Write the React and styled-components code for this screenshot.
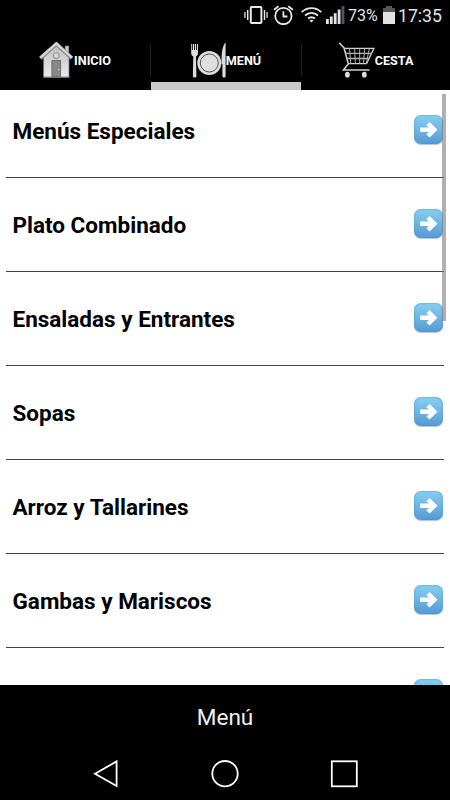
import React from "react";
import styled, { createGlobalStyle } from "styled-components";

const GlobalStyle = createGlobalStyle`
  * {
    box-sizing: border-box;
  }
  body {
    margin: 0;
    background: #000;
    font-family: Roboto, "Liberation Sans", sans-serif;
  }
  svg {
    display: block;
    flex: none;
  }
`;

const Screen = styled.div`
  display: flex;
  flex-direction: column;
  width: 450px;
  height: 800px;
  overflow: hidden;
  background: #000;
`;

const StatusBar = styled.div`
  display: flex;
  align-items: center;
  justify-content: flex-end;
  height: 32px;
  padding: 0 8px 2px 0;
  color: #e2e2e2;
`;

const StatusText = styled.span`
  width: ${(props) => props.$width}px;
  font-size: ${(props) => props.$size}px;
  line-height: 22px;
  padding-top: 2px;
  white-space: nowrap;
`;

const StatusIcon = styled.svg`
  margin-right: ${(props) => props.$gap}px;
`;

const Tabs = styled.div`
  display: grid;
  grid-template-columns: 150px 1px 150px 1px 148px;
  height: 58px;
`;

const Tab = styled.div`
  position: relative;
  display: flex;
  align-items: center;
  justify-content: center;
  padding-bottom: 2px;
  color: #fff;
  font-size: 12.6px;
  font-weight: 700;
`;

const Indicator = styled.div`
  position: absolute;
  left: 0;
  right: 0;
  bottom: 0;
  height: 8px;
  background: #cacaca;
`;

const Divider = styled.div`
  height: 31px;
  margin-top: 13px;
  background: #222;
`;

const ListArea = styled.div`
  position: relative;
  height: 595px;
  padding: 0 6px;
  overflow: hidden;
  background: #fff;
`;

const List = styled.div`
  margin-top: -6px;
`;

const Row = styled.div`
  display: flex;
  align-items: center;
  justify-content: space-between;
  height: 94px;
  padding: 0 1px 0 6.5px;
  border-bottom: 1px solid #444;
`;

const RowTitle = styled.span`
  padding-top: 1px;
  font-size: 22.5px;
  font-weight: 700;
  color: #000;
`;

const ArrowBox = styled.div`
  display: flex;
  align-items: center;
  justify-content: center;
  width: 29px;
  height: 29px;
  margin-top: -2px;
  border-radius: 7px;
  background: linear-gradient(#86cfef, #70b7e4 48%, #5599d3);
  box-shadow: inset 0 0 2px #4c91c6, 0 1px 1px rgba(0, 0, 0, 0.25);
`;

const ScrollThumb = styled.div`
  position: absolute;
  top: 4px;
  right: 4px;
  width: 4px;
  height: 227px;
  background: rgba(128, 128, 128, 0.62);
`;

const Footer = styled.div`
  height: 63px;
  padding-top: 1px;
  line-height: 63px;
  text-align: center;
  font-size: 22.6px;
  color: #f0f0f0;
`;

const NavBar = styled.div`
  display: flex;
  justify-content: space-between;
  padding: 11px 92px 0 93px;
`;

const HouseIcon = () => (
  <svg width="35" height="36" viewBox="0 0 35 36">
    <defs>
      <linearGradient id="wall" x1="0" y1="0" x2="0" y2="1">
        <stop offset="0" stopColor="#bdbdbd" />
        <stop offset="1" stopColor="#ececec" />
      </linearGradient>
    </defs>
    <path d="M26.2 4h3.6v10l-3.6-4z" fill="#ccc" stroke="#888" strokeWidth=".6" />
    <path d="M4.6 15 17.4 2.5 30 15v20.3H4.6z" fill="url(#wall)" stroke="#777" strokeWidth=".8" />
    <path d="M1.3 16.2 17.4 2 33 16.2" fill="none" stroke="#888" strokeWidth="4" />
    <path d="M1.3 15.8 17.4 1.6 33 15.8" fill="none" stroke="#d8d8d8" strokeWidth="2.2" />
    <circle cx="17.3" cy="13.7" r="2.9" fill="#d4d4d4" stroke="#999" strokeWidth="1.1" />
    <path d="M12.9 18.5h8.7v16.2h-8.7z" fill="#888" stroke="#666" strokeWidth=".9" />
    <circle cx="19.8" cy="27.5" r=".7" fill="#ddd" />
    <path d="M4.5 35.2h26" stroke="#777" />
  </svg>
);

const PlateIcon = () => (
  <svg width="35" height="36" viewBox="0 0 35 36">
    <g fill="#dcdcdc">
      <path d="M.2 2h1v6h.8V2h1.2v6h.8V2h1.1v6H6V2h1v9.5c0 1.6-1 2.4-2 3l.4 19.4c0 2-3.5 2-3.5 0l.4-19.4c-1.2-.6-2.1-1.4-2.1-3z" />
      <circle cx="18.3" cy="21" r="12" />
      <path d="M34.6.3v34c0 1.6-3.2 1.6-3.2 0V22h-.8c-.2-9 .4-18 4-21.7z" />
    </g>
    <circle cx="18.3" cy="21" r="9" fill="#dedede" stroke="#555" strokeWidth="1" />
  </svg>
);

const CartIcon = () => (
  <svg width="36" height="36" viewBox="0 0 36 36">
    <g fill="none" stroke="#d0d0d0" strokeWidth="1.3">
      <path d="M.3.8 5 5.8l4.3 16.1L4.5 28h26" strokeWidth="1.6" />
      <path d="M5 6.4h30L27.6 21.6H9.2" />
      <path d="M6.3 11.4h26M7.7 16.5h22.3" stroke="#b5b5b5" />
      <path d="m10.5 6.5 1.3 15M15.6 6.5l.7 15M20.7 6.5v15M25.6 6.5l-1 15M30.3 6.5l-3 15" stroke="#b0b0b0" strokeWidth="1" />
    </g>
    <ellipse cx="8.4" cy="32.7" rx="2.4" ry="2.9" fill="#ddd" />
    <ellipse cx="25.3" cy="32.7" rx="2.4" ry="2.9" fill="#ddd" />
  </svg>
);

const ArrowIcon = () => (
  <ArrowBox>
    <svg width="19" height="18" viewBox="0 0 19 18">
      <path
        d="M1.2 8.8H15M9 2.6l6.3 6.2L9 15"
        fill="none"
        stroke="#fff"
        strokeWidth="4.4"
      />
    </svg>
  </ArrowBox>
);

const StatusIcons = () => (
  <>
    <StatusIcon $gap={5} width="24" height="18" viewBox="0 0 24 18">
      <rect x="6.8" y="1" width="10.6" height="16" rx=".8" fill="none" stroke="#e8e8e8" strokeWidth="2" />
      <path d="M3.7 4v10M20.5 4v10" stroke="#e8e8e8" strokeWidth="1.4" />
      <path d="M.9 6v6M23.1 6v6" stroke="#d0d0d0" strokeWidth="1.4" />
    </StatusIcon>
    <StatusIcon $gap={7} width="21" height="20" viewBox="0 0 21 20">
      <g fill="none" stroke="#e8e8e8" strokeWidth="1.8">
        <circle cx="10.4" cy="11" r="8.2" />
        <path d="M1 4.8 5.5 1.2M19.8 4.8l-4.5-3.6M10.4 6.3v5.2h4" />
      </g>
    </StatusIcon>
    <StatusIcon $gap={4} width="21" height="16" viewBox="0 0 21 16">
      <g fill="none" stroke="#e8e8e8" strokeWidth="1.9">
        <path d="M.7 5.1c5.6-5.3 14-5.3 19.6 0" />
        <path d="M4 8.5c3.9-3.4 9.1-3.4 13 0" />
        <path d="M7 11.6c2.2-1.8 4.8-1.8 7 0" />
      </g>
      <path d="m10.5 15.6-2-2.2c1.3-1 2.7-1 4 0z" fill="#e8e8e8" />
    </StatusIcon>
    <StatusIcon $gap={3} width="19" height="18" viewBox="0 0 19 18">
      <path d="M0 13h2.8v5H0zM3.9 10.5h2.8V18H3.9zM7.8 7.3h2.8V18H7.8zM11.7 3.6h2.8V18h-2.8z" fill="#e2e2e2" />
      <path d="M15.6 0h2.8v18h-2.8z" fill="#555" />
    </StatusIcon>
  </>
);

const items = [
  "Menús Especiales",
  "Plato Combinado",
  "Ensaladas y Entrantes",
  "Sopas",
  "Arroz y Tallarines",
  "Gambas y Mariscos",
  "",
];

export default function App() {
  return (
    <Screen>
      <GlobalStyle />
      <StatusBar>
        <StatusIcons />
        <StatusText $width={35} $size={16}>73%</StatusText>
        <StatusIcon $gap={3} width="12" height="18" viewBox="0 0 12 18">
          <path d="M3 0h6v2h3v4H0V2h3z" fill="#555" />
          <path d="M0 6h12v12H0z" fill="#e2e2e2" />
        </StatusIcon>
        <StatusText $width={44} $size={17.6}>17:35</StatusText>
      </StatusBar>
      <Tabs>
        <Tab>
          <HouseIcon />
          INICIO
        </Tab>
        <Divider />
        <Tab>
          <PlateIcon />
          MENÚ
          <Indicator />
        </Tab>
        <Divider />
        <Tab>
          <CartIcon />
          CESTA
        </Tab>
      </Tabs>
      <ListArea>
        <List>
          {items.map((item, index) => (
            <Row key={index}>
              <RowTitle>{item}</RowTitle>
              <ArrowIcon />
            </Row>
          ))}
        </List>
        <ScrollThumb />
      </ListArea>
      <Footer>Menú</Footer>
      <NavBar>
        <svg width="26" height="30" viewBox="0 0 26 30">
          <path d="M2 14.7 23.6 2.4v24.6z" fill="none" stroke="#fff" strokeWidth="1.8" />
        </svg>
        <svg width="28" height="30" viewBox="0 0 28 30">
          <circle cx="14" cy="14.7" r="12.7" fill="none" stroke="#fff" strokeWidth="1.8" />
        </svg>
        <svg width="28" height="30" viewBox="0 0 28 30">
          <rect x="1.8" y="2.3" width="25" height="25" fill="none" stroke="#fff" strokeWidth="1.8" />
        </svg>
      </NavBar>
    </Screen>
  );
}
